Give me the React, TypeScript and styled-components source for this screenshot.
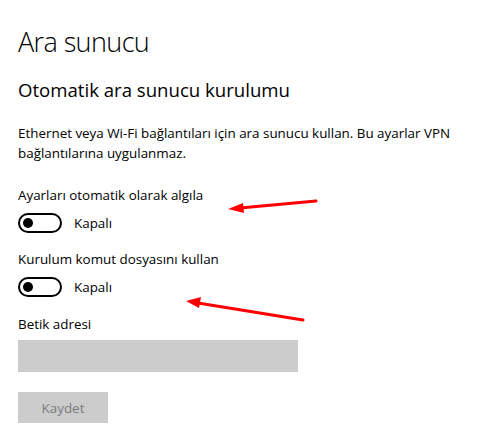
import styled, { createGlobalStyle } from "styled-components";

const GlobalStyle = createGlobalStyle`
  html, body {
    margin: 0;
    padding: 0;
    background: #ffffff;
  }
  body {
    font-family: "Segoe UI", "Open Sans", "Noto Sans", sans-serif;
    color: #000000;
  }
`;

const Page = styled.div`
  position: relative;
  width: 480px;
  height: 448px;
  overflow: hidden;
  padding: 0 0 0 18px;
  box-sizing: border-box;
`;

const Title = styled.h1`
  margin: 0;
  padding-top: 23px;
  font-size: 27px;
  font-weight: 300;
  letter-spacing: -0.6px;
  line-height: 38px;
`;

const Subtitle = styled.h2`
  margin: 0;
  padding-top: 16px;
  font-size: 18.6px;
  font-weight: 400;
  line-height: 26px;
`;

const Description = styled.p`
  margin: 0;
  padding-top: 20px;
  width: 440px;
  font-size: 13.4px;
  line-height: 20px;
`;

const Setting = styled.div<{ $gap: number }>`
  display: flex;
  flex-direction: column;
  padding-top: ${(p) => p.$gap}px;
`;

const Label = styled.div`
  font-size: 13.4px;
  line-height: 20px;
`;

const ToggleRow = styled.div`
  display: flex;
  align-items: center;
  gap: 12px;
  margin-top: 8px;
`;

const Toggle = styled.div`
  box-sizing: border-box;
  width: 44px;
  height: 20px;
  border: 2px solid #000000;
  border-radius: 10px;
  display: flex;
  align-items: center;
  padding-left: 3px;

  &::before {
    content: "";
    width: 10px;
    height: 10px;
    border-radius: 50%;
    background: #000000;
  }
`;

const State = styled.span`
  font-size: 13.4px;
  line-height: 20px;
`;

const Input = styled.div`
  width: 280px;
  height: 32px;
  margin-top: 6px;
  background: #cccccc;
`;

const Button = styled.button`
  margin-top: 20px;
  width: 90px;
  height: 31px;
  border: none;
  background: #cccccc;
  color: #7a7a7a;
  font-family: inherit;
  font-size: 13.4px;
  padding: 0;
`;

const Arrows = styled.svg`
  position: absolute;
  left: 0;
  top: 0;
  pointer-events: none;
`;

export default function App() {
  return (
    <>
      <GlobalStyle />
      <Page>
        <Title>Ara sunucu</Title>
        <Subtitle>Otomatik ara sunucu kurulumu</Subtitle>
        <Description>
          Ethernet veya Wi-Fi bağlantıları için ara sunucu kullan. Bu ayarlar
          VPN bağlantılarına uygulanmaz.
        </Description>
        <Setting $gap={22}>
          <Label>Ayarları otomatik olarak algıla</Label>
          <ToggleRow>
            <Toggle />
            <State>Kapalı</State>
          </ToggleRow>
        </Setting>
        <Setting $gap={16}>
          <Label>Kurulum komut dosyasını kullan</Label>
          <ToggleRow>
            <Toggle />
            <State>Kapalı</State>
          </ToggleRow>
        </Setting>
        <Setting $gap={17}>
          <Label>Betik adresi</Label>
          <Input />
        </Setting>
        <Button disabled>Kaydet</Button>
        <Arrows width="480" height="448" viewBox="0 0 480 448">
          <g stroke="#ff0000" strokeWidth="3" strokeLinecap="round" fill="#ff0000">
            <line x1="316" y1="201" x2="240" y2="208" />
            <polygon points="228,209 243,203 244,213" stroke="none" />
            <line x1="303" y1="320" x2="198" y2="303" />
            <polygon points="186,301 201,297 199,308" stroke="none" />
          </g>
        </Arrows>
      </Page>
    </>
  );
}
